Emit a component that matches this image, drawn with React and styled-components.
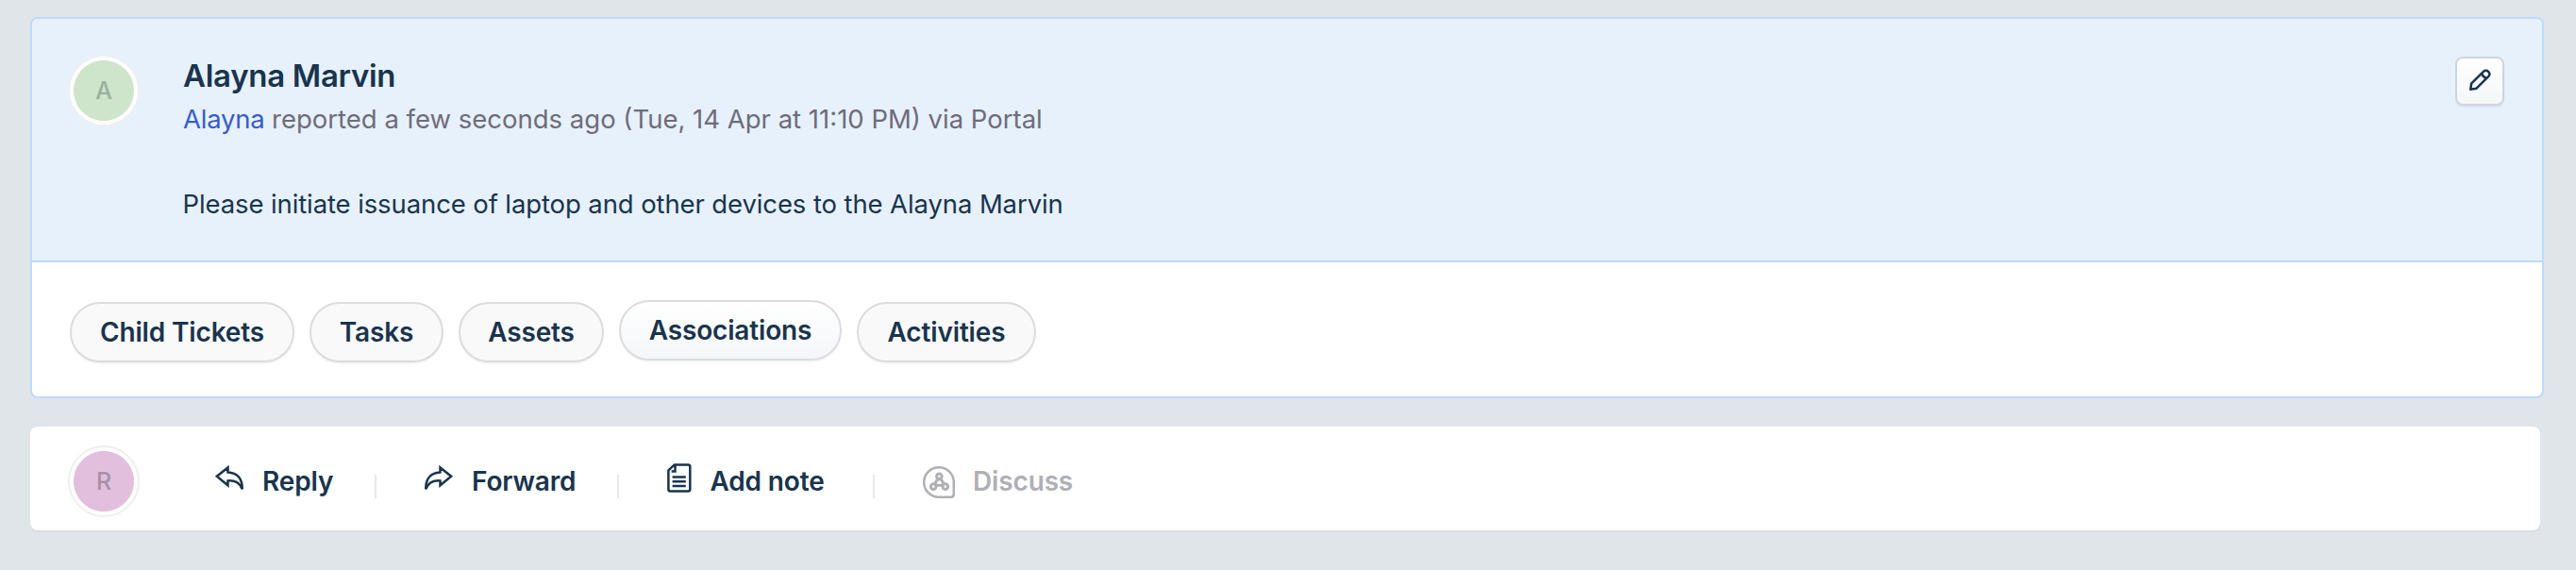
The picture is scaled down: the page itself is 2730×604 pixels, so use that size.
import React from "react";
import styled, { createGlobalStyle, css } from "styled-components";

const INK = "#19344e";
const LINE = "#bddafd";

const GlobalStyle = createGlobalStyle`
  *, *::before, *::after { box-sizing: border-box; }
  body {
    margin: 0;
    background: #dfe5e8;
    color: ${INK};
    font-family: Inter, "Liberation Sans", sans-serif;
  }
`;

const Page = styled.main`
  display: flex;
  flex-direction: column;
  gap: 30px;
  min-height: 604px;
  padding: 18px 34px 0 32px;
`;

const TicketCard = styled.article`
  height: 404px;
  border: 2px solid ${LINE};
  border-radius: 8px;
  background: #fff;
  overflow: hidden;
`;

const TicketHeader = styled.header`
  display: flex;
  align-items: flex-start;
  height: 258px;
  padding: 38px 40px 0 38px;
  border-bottom: 2px solid ${LINE};
  background: #e7f1fc;
`;

const Avatar = styled.div`
  display: flex;
  flex: none;
  align-items: center;
  justify-content: center;
  width: 76px;
  height: 76px;
  border: 2px solid #efefef;
  border-radius: 50%;
  background: radial-gradient(circle, ${(p) => p.$fill} 31.6px, #fff 32.4px);
  color: ${(p) => p.$ink};
  font-size: 25px;
  font-weight: 500;
  line-height: 30px;
`;

const Summary = styled.div`
  flex: 1;
  padding: 2px 0 0 46px;
`;

const Name = styled.h1`
  margin: 0;
  font-size: 33px;
  font-weight: 600;
  line-height: 40px;
  letter-spacing: -0.3px;
`;

const Meta = styled.p`
  margin: 8px 0 0;
  color: #6e6c7b;
  font-size: 27.5px;
  line-height: 36px;
`;

const Requester = styled.a`
  color: #375dcb;
  letter-spacing: -0.25px;
`;

const Description = styled.p`
  margin: 52px 0 0;
  font-size: 27.5px;
  line-height: 40px;
  letter-spacing: -0.11px;
  text-indent: -0.5px;
`;

const EditButton = styled.button`
  display: flex;
  align-items: center;
  justify-content: center;
  width: 52px;
  height: 52px;
  margin-top: 2px;
  padding: 0 0 2px;
  border: 2px solid #cfd5dc;
  border-radius: 8px;
  background: linear-gradient(#fff, #f4f6f8);
  box-shadow: 0 2px 1px rgba(24, 50, 71, 0.06);
  color: ${INK};
`;

const Tabs = styled.nav`
  display: flex;
  gap: 16px;
  padding: 42px 0 0 40px;
`;

const Tab = styled.button`
  width: ${(p) => p.$width}px;
  height: 64px;
  padding: 0;
  border: 2px solid #dbdcde;
  border-radius: 32px;
  background: #f9f9f9;
  box-shadow: 0 2px 1px rgba(0, 0, 0, 0.04);
  color: ${INK};
  font: 600 28px/36px Inter, "Liberation Sans", sans-serif;
  letter-spacing: -0.15px;
  white-space: nowrap;
  ${(p) =>
    p.$raised &&
    css`
      margin-top: -2px;
      background: linear-gradient(#fff, #f4f6f9);
    `}
`;

const ReplyBar = styled.section`
  display: flex;
  align-items: flex-start;
  width: 2660px;
  height: 110px;
  padding: 20px 0 0 40px;
  border-radius: 8px;
  background: #fff;
  box-shadow: 0 2px 0 rgba(24, 50, 71, 0.04);
`;

const Actions = styled.div`
  display: flex;
  align-items: center;
  height: 76px;
  margin-left: 80px;
`;

const Action = styled.button`
  display: flex;
  align-items: center;
  gap: ${(p) => p.$gap}px;
  width: ${(p) => p.$width}px;
  padding: 0;
  border: 0;
  background: none;
  color: ${(p) => (p.$muted ? "#b0afb6" : INK)};
  font: 600 28px/36px Inter, "Liberation Sans", sans-serif;
  letter-spacing: -0.15px;
  white-space: nowrap;
`;

const Separator = styled.span`
  width: 2px;
  height: 25px;
  margin: 11px 51px 0 0;
  background: #e8e8ea;
`;

const Glyph = styled.svg`
  flex: none;
  fill: none;
  stroke: currentColor;
  stroke-width: 2.5;
`;

const ARROW =
  "M1.8 14.7L13.5 5.4V10.4C23 10.8 29.3 17 28.7 28.4C26.3 21.6 21 18.9 13.5 19.4V24.3Z";

const ReplyIcon = () => (
  <Glyph width="30" height="40" viewBox="0 0 30 40">
    <path d={ARROW} />
  </Glyph>
);

const ForwardIcon = () => (
  <Glyph width="30" height="40" viewBox="0 0 30 40">
    <path d={ARROW} transform="translate(30 0) scale(-1 1)" />
  </Glyph>
);

const NoteIcon = () => (
  <Glyph width="26" height="40" viewBox="0 0 26 40">
    <path d="M1.4 8.4L7.8 2.4H22.3Q24.3 2.4 24.3 4.4V28.6Q24.3 30.6 22.3 30.6H3.4Q1.4 30.6 1.4 28.6Z" />
    <path d="M8.5 2.4V9.6H4.6M5.6 15.6H19.8M5.6 20.3H19.8M5.6 25H19.8" />
  </Glyph>
);

const DiscussIcon = () => (
  <Glyph width="34" height="40" viewBox="0 0 34 40">
    <path d="M17 5.2C25.8 5.2 32.8 12.2 32.8 21V33.6Q32.8 36.8 29.6 36.8H17A15.8 15.8 0 0 1 17 5.2Z" />
    <g strokeWidth="3">
      <circle cx="17.4" cy="14.7" r="2.8" />
      <circle cx="11.2" cy="25.6" r="2.8" />
      <circle cx="23.8" cy="25.6" r="2.8" />
      <path d="M15.9 17L12.6 22.9M18.9 17L22.4 22.9M14 24.3H21M17.4 17.5V19.5" />
    </g>
  </Glyph>
);

const PencilIcon = () => (
  <Glyph width="24" height="24" viewBox="0 0 24 24" strokeLinejoin="round">
    <path d="M2.2 21.8L3.2 15.3L15.9 2.9C17.4 1.5 19.7 1.5 21.1 2.9C22.6 4.4 22.5 6.6 21.1 8.1L8.5 20.7Z" />
    <path d="M14 4.9C15.3 8 16.6 9.3 19.3 10" />
  </Glyph>
);

const tabs = [
  { label: "Child Tickets", width: 238 },
  { label: "Tasks", width: 142 },
  { label: "Assets", width: 154 },
  { label: "Associations", width: 236, raised: true },
  { label: "Activities", width: 190 },
];

const actions = [
  { label: "Reply", Icon: ReplyIcon, width: 169, gap: 20 },
  { label: "Forward", Icon: ForwardIcon, width: 204, gap: 20 },
  { label: "Add note", Icon: NoteIcon, width: 218, gap: 19.5 },
  { label: "Discuss", Icon: DiscussIcon, width: 170, gap: 19, muted: true },
];

export default function App() {
  return (
    <>
      <GlobalStyle />
      <Page>
        <TicketCard>
          <TicketHeader>
            <Avatar $fill="#cee5cb" $ink="#9aaf9b">A</Avatar>
            <Summary>
              <Name>Alayna Marvin</Name>
              <Meta>
                <Requester>Alayna</Requester> reported a few seconds ago (Tue, 14 Apr at 11:10 PM) via Portal
              </Meta>
              <Description>
                Please initiate issuance of laptop and other devices to the Alayna Marvin
              </Description>
            </Summary>
            <EditButton aria-label="Edit">
              <PencilIcon />
            </EditButton>
          </TicketHeader>
          <Tabs>
            {tabs.map((tab) => (
              <Tab key={tab.label} $width={tab.width} $raised={tab.raised}>
                {tab.label}
              </Tab>
            ))}
          </Tabs>
        </TicketCard>
        <ReplyBar>
          <Avatar $fill="#e3bfde" $ink="#aa90a8">R</Avatar>
          <Actions>
            {actions.map(({ label, Icon, width, gap, muted }, i) => (
              <React.Fragment key={label}>
                {i > 0 && <Separator />}
                <Action $width={width} $gap={gap} $muted={muted}>
                  <Icon />
                  {label}
                </Action>
              </React.Fragment>
            ))}
          </Actions>
        </ReplyBar>
      </Page>
    </>
  );
}
